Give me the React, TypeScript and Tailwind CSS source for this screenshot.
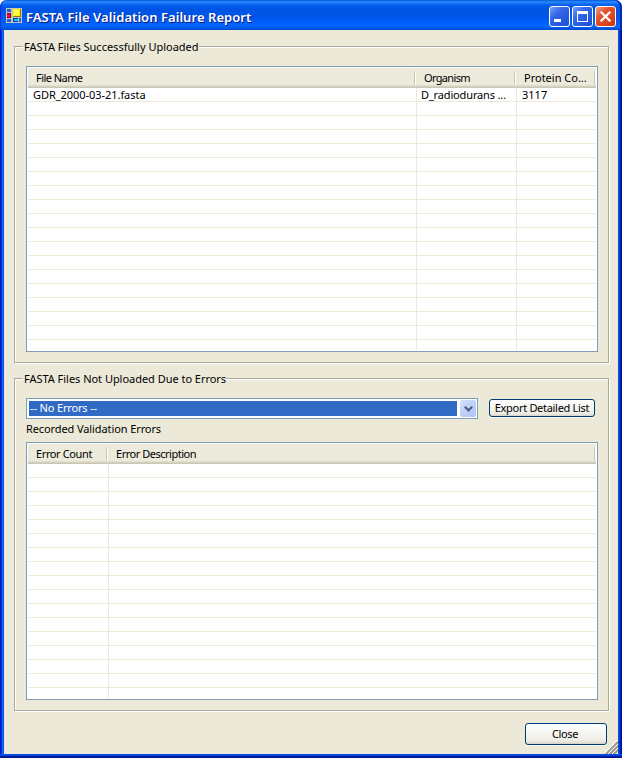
import React from "react";

const TEXT = "whitespace-pre leading-[14px]";

function ListHeader({ cells }: { cells: { label: string; cls: string }[] }) {
  return (
    <div className="flex h-5 shrink-0 border-b border-[#cbc7b8] bg-[linear-gradient(#ebeadb_0px,#ebeadb_17px,#e2decd_17px,#e2decd_18px,#d6d2c2_18px)] pt-[3px]">
      {cells.map((c) => (
        <div key={c.label} className={"flex h-[14px] " + c.cls}>
          <span className="flex-1 overflow-hidden whitespace-pre pl-2 leading-[14px]">{c.label}</span>
          <i className="h-[14px] w-px bg-[#c7c5b2]" />
          <i className="h-[14px] w-px bg-white" />
        </div>
      ))}
    </div>
  );
}

function Rows({ count, widths, data }: { count: number; widths: string[]; data?: React.ReactNode[] }) {
  return (
    <div className="flex min-h-0 flex-1 flex-col overflow-hidden">
      {Array.from({ length: count }, (_, r) => (
        <div key={r} className={"flex shrink-0 " + (r === count - 1 ? "h-[10px]" : "h-[14px] border-b border-[#ece9d8]")}>
          {widths.map((w, i) => (
            <div key={i} className={"whitespace-pre leading-[14px] " + w}>
              {r === 0 && data ? data[i] : null}
            </div>
          ))}
        </div>
      ))}
    </div>
  );
}

function Group({ title, cls, titleCls, children }: { title: string; cls: string; titleCls: string; children: React.ReactNode }) {
  return (
    <section className={"flex flex-col border border-[#aca899] px-[11px] shadow-[1px_1px_0_#fff,inset_1px_1px_0_#fff] " + cls}>
      <h2 className={"-ml-[3px] -mt-[7px] h-[14px] self-start bg-[#ece9d8] pl-px " + TEXT + " " + titleCls}>{title}</h2>
      {children}
    </section>
  );
}

const LIST = "flex flex-col border border-[#7f9db9] bg-white p-px";
const BTN =
  "rounded-[3px] border border-[#003c74] bg-[linear-gradient(#fff,#f3f2ec_60%,#ecebe5_86%,#d6d0c5)] text-center whitespace-pre shadow-[0_1px_0_#f8f6ee]";
const CAP = "flex h-[21px] w-[21px] items-center justify-center rounded-[3px] border border-white";

export default function App() {
  return (
    <div className="flex h-[758px] w-[622px] flex-col overflow-hidden bg-white font-['Noto_Sans','Open_Sans',sans-serif] text-[11px] text-black">
      <header className="flex h-[30px] shrink-0 items-start rounded-t-[7px] bg-[linear-gradient(#0058d8_0px,#2f8bff_2px,#1a78fa_3px,#0560ee_5px,#0054e3_8px,#0055e8_16px,#005cf6_21px,#0266ff_25px,#0263f8_27px,#0050d8_29px,#0048c8_30px)] pl-[6px] pr-[6px] shadow-[inset_1px_0_0_#0831d9,inset_-2px_0_0_#0026b8]">
        <svg className="mt-2 h-[15px] w-4" viewBox="0 0 16 15" shapeRendering="crispEdges">
          <path d="M0 0H16V15H0Z" fill="#c9c5bb" />
          <path d="M1 1H5V4H1Z" fill="#1c62d8" />
          <path d="M1 5H5V10H1Z" fill="#800020" />
          <path d="M1 6H4V9H1Z" fill="#ff0040" />
          <path d="M7 1H15V9H7Z" fill="#857c10" />
          <path d="M7 1H14V8H7Z" fill="#fff200" />
          <path d="M8 2H13V7H8Z" fill="#ffff50" />
          <path d="M1 11H5V14H1Z" fill="#1c62d8" />
          <path d="M7 10H12V14H7Z" fill="#003ca0" />
          <path d="M8 11H12V13H8Z" fill="#18c4f0" />
          <path d="M13 10H15V14H13Z" fill="#1c62d8" />
        </svg>
        <h1 className="mt-2 flex-1 whitespace-pre pl-1 text-[13px] font-semibold leading-[18px] tracking-[0.05px] text-white [text-shadow:1px_1px_0_#0a1883]">
          FASTA File Validation Failure Report
        </h1>
        <div className="mt-[6px] flex gap-[2px]">
          <button className={CAP + " bg-[linear-gradient(135deg,#7aa0f5,#3468e6_35%,#2458dc_75%,#1e4fd0)]"}>
            <svg width="19" height="19" viewBox="0 0 19 19"><path d="M4 12H11V15H4Z" fill="#fff" /></svg>
          </button>
          <button className={CAP + " bg-[linear-gradient(135deg,#7aa0f5,#3468e6_35%,#2458dc_75%,#1e4fd0)]"}>
            <svg width="19" height="19" viewBox="0 0 19 19" shapeRendering="crispEdges"><path d="M4 4H15V15H4ZM5 7V14H14V7Z" fillRule="evenodd" fill="#fff" /></svg>
          </button>
          <button className={CAP + " bg-[linear-gradient(135deg,#f0a088,#e2532c_35%,#dc4420_70%,#c03410)]"}>
            <svg width="19" height="19" viewBox="0 0 19 19"><path d="M4.7 4.7L14.3 14.3M14.3 4.7L4.7 14.3" stroke="#fff" strokeWidth="2.3" /></svg>
          </button>
        </div>
      </header>
      <div className="flex min-h-0 flex-1">
        <i className="w-1 bg-[linear-gradient(90deg,#0019cf_1px,#0831d9_1px,#0831d9_2px,#166aee_2px,#166aee_3px,#0855dd_3px)]" />
        <main className="flex h-[724px] w-[614px] flex-col bg-[#ece9d8] pl-[10px] pt-4">
          <Group cls="h-[317px] w-[595px]" titleCls="tracking-normal" title="FASTA Files Successfully Uploaded">
            <div className={LIST + " mt-[12px] h-[286px] w-[572px]"}>
              <ListHeader
                cells={[
                  { label: "File Name", cls: "w-[388px] tracking-[-0.55px]" },
                  { label: "Organism", cls: "w-[100px] tracking-[-0.65px]" },
                  { label: "Protein Co...", cls: "w-[80px]" },
                ]}
              />
              <Rows
                count={19}
                widths={[
                  "w-[389px] border-r border-[#ece9d8] pl-[5px] tracking-[-0.05px]",
                  "w-[100px] border-r border-[#ece9d8] pl-[4px] tracking-[-0.15px]",
                  "flex-1 pl-[5px]",
                ]}
                data={["GDR_2000-03-21.fasta", "D_radiodurans ...", "3117"]}
              />
            </div>
          </Group>
          <Group cls="mt-[15px] h-[333px] w-[595px]" titleCls="tracking-[-0.03px]" title="FASTA Files Not Uploaded Due to Errors">
            <div className="mt-[12px] flex h-[21px]">
              <div className="flex h-[21px] w-[452px] border border-[#7f9db9] bg-white p-px">
                <div className={"m-px h-[15px] w-[429px] bg-[#316ac5] pl-px tracking-[-0.15px] text-white " + TEXT}>-- No Errors --</div>
                <div className="ml-[2px] flex h-[17px] w-4 items-center justify-center rounded-[2px] bg-[linear-gradient(135deg,#d5e0fd,#bfd0fa_50%,#aec4f6)]">
                  <svg width="9" height="6" viewBox="0 0 9 6"><path d="M.8 .8L4.5 4.4L8.2 .8" fill="none" stroke="#4d6185" strokeWidth="2.2" /></svg>
                </div>
              </div>
              <button className={BTN + " ml-[11px] mt-px h-[18px] w-[106px] pb-px leading-[14px] tracking-[-0.3px]"}>Export Detailed List</button>
            </div>
            <div className={"mt-[3px] h-[14px] tracking-[-0.1px] " + TEXT}>Recorded Validation Errors</div>
            <div className={LIST + " mt-[6px] h-[258px] w-[572px]"}>
              <ListHeader
                cells={[
                  { label: "Error Count", cls: "w-[80px] tracking-[-0.38px]" },
                  { label: "Error Description", cls: "w-[488px] tracking-[-0.48px]" },
                ]}
              />
              <Rows count={17} widths={["w-[81px] border-r border-[#ece9d8]", "flex-1"]} />
            </div>
          </Group>
          <div className="flex justify-end">
            <button className={BTN + " mt-[12px] h-[22px] w-[82px] pb-px pr-[2px] leading-[19px] tracking-[-0.35px]"}>Close</button>
            <svg className="-ml-[2px] mt-[29px] h-[14px] w-[13px]" viewBox="0 0 13 14" shapeRendering="crispEdges">
              <path d="M-1 14L13 0M3 14L13 4M7 14L13 8" stroke="#fff" strokeWidth="1" />
              <path d="M.5 14.5L13.5 1.5M4.5 14.5L13.5 5.5M8.5 14.5L13.5 9.5" stroke="#a19e8f" strokeWidth="1.6" />
            </svg>
          </div>
        </main>
        <i className="w-1 bg-[linear-gradient(90deg,#0550ea_1px,#0340dc_1px,#0340dc_2px,#001ea0_2px,#001ea0_3px,#00138c_3px)]" />
      </div>
      <i className="h-1 shrink-0 bg-[linear-gradient(#0550ea_1px,#0441dd_1px,#0441dd_2px,#001ea0_2px,#001ea0_3px,#00138c_3px)]" />
    </div>
  );
}
